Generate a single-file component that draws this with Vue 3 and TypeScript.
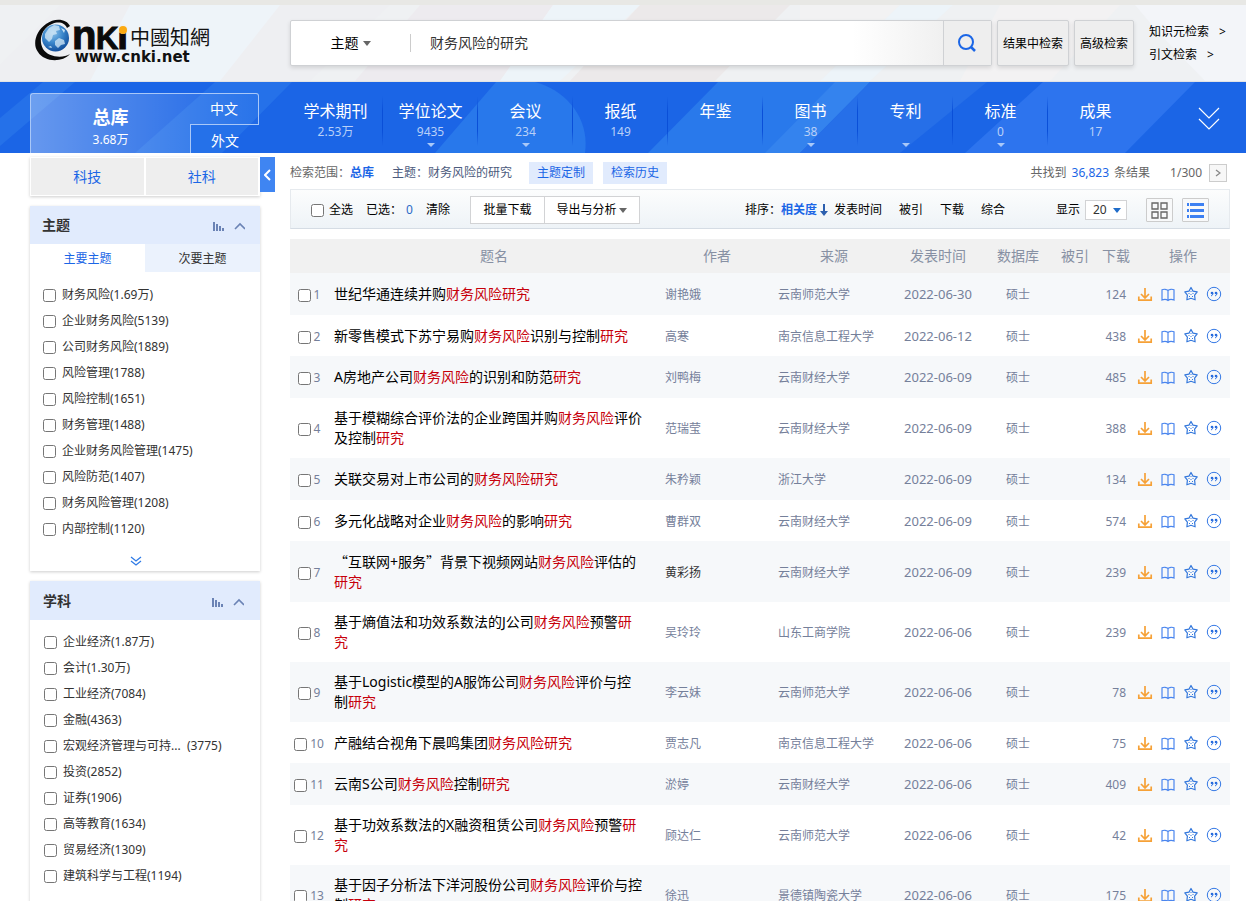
<script setup lang="ts">
import { ref } from 'vue'

type Kind = 'plain' | 'hit' | 'quote'
interface Part { text: string; kind: Kind }
interface Paper {
  title: Part[]
  author: string
  strong?: boolean
  source: string
  date: string
  downloads: number
}
interface Facet { name: string; count: string }

// "*" toggles the highlighted search terms, curly quotes take the full-width face
function parse(raw: string): Part[] {
  const parts: Part[] = []
  raw.split('*').forEach((chunk, i) => {
    chunk.split(/([“”])/).filter(Boolean).forEach((text) => {
      const kind: Kind = /[“”]/.test(text) ? 'quote' : i % 2 ? 'hit' : 'plain'
      parts.push({ text, kind })
    })
  })
  return parts
}

const dbs = [
  { name: '学术期刊', count: '2.53万', more: false },
  { name: '学位论文', count: '9435', more: true },
  { name: '会议', count: '234', more: true },
  { name: '报纸', count: '149', more: false },
  { name: '年鉴', count: '', more: false },
  { name: '图书', count: '38', more: true },
  { name: '专利', count: '', more: true },
  { name: '标准', count: '0', more: true },
  { name: '成果', count: '17', more: false },
]

const topics: Facet[] = [
  { name: '财务风险', count: '1.69万' },
  { name: '企业财务风险', count: '5139' },
  { name: '公司财务风险', count: '1889' },
  { name: '风险管理', count: '1788' },
  { name: '风险控制', count: '1651' },
  { name: '财务管理', count: '1488' },
  { name: '企业财务风险管理', count: '1475' },
  { name: '风险防范', count: '1407' },
  { name: '财务风险管理', count: '1208' },
  { name: '内部控制', count: '1120' },
]

const subjects: Facet[] = [
  { name: '企业经济', count: '1.87万' },
  { name: '会计', count: '1.30万' },
  { name: '工业经济', count: '7084' },
  { name: '金融', count: '4363' },
  { name: '宏观经济管理与可持...  ', count: '3775' },
  { name: '投资', count: '2852' },
  { name: '证券', count: '1906' },
  { name: '高等教育', count: '1634' },
  { name: '贸易经济', count: '1309' },
  { name: '建筑科学与工程', count: '1194' },
]

const papers: Paper[] = [
  { title: parse('世纪华通连续并购*财务风险研究*'), author: '谢艳娥', source: '云南师范大学', date: '2022-06-30', downloads: 124 },
  { title: parse('新零售模式下苏宁易购*财务风险*识别与控制*研究*'), author: '高寒', source: '南京信息工程大学', date: '2022-06-12', downloads: 438 },
  { title: parse('A房地产公司*财务风险*的识别和防范*研究*'), author: '刘鸭梅', source: '云南财经大学', date: '2022-06-09', downloads: 485 },
  { title: parse('基于模糊综合评价法的企业跨国并购*财务风险*评价及控制*研究*'), author: '范瑞莹', source: '云南财经大学', date: '2022-06-09', downloads: 388 },
  { title: parse('关联交易对上市公司的*财务风险研究*'), author: '朱矜颖', source: '浙江大学', date: '2022-06-09', downloads: 134 },
  { title: parse('多元化战略对企业*财务风险*的影响*研究*'), author: '曹群双', source: '云南财经大学', date: '2022-06-09', downloads: 574 },
  { title: parse('“互联网+服务”背景下视频网站*财务风险*评估的*研究*'), author: '黄彩扬', strong: true, source: '云南财经大学', date: '2022-06-09', downloads: 239 },
  { title: parse('基于熵值法和功效系数法的J公司*财务风险*预警*研究*'), author: '吴玲玲', source: '山东工商学院', date: '2022-06-06', downloads: 239 },
  { title: parse('基于Logistic模型的A服饰公司*财务风险*评价与控制*研究*'), author: '李云妹', source: '云南师范大学', date: '2022-06-06', downloads: 78 },
  { title: parse('产融结合视角下晨鸣集团*财务风险研究*'), author: '贾志凡', source: '南京信息工程大学', date: '2022-06-06', downloads: 75 },
  { title: parse('云南S公司*财务风险*控制*研究*'), author: '淤婷', source: '云南财经大学', date: '2022-06-06', downloads: 409 },
  { title: parse('基于功效系数法的X融资租赁公司*财务风险*预警*研究*'), author: '顾达仁', source: '云南师范大学', date: '2022-06-06', downloads: 42 },
  { title: parse('基于因子分析法下洋河股份公司*财务风险*评价与控制*研究*'), author: '徐迅', source: '景德镇陶瓷大学', date: '2022-06-06', downloads: 175 },
]

const query = ref('财务风险的研究')
</script>

<template>
  <div class="page">
    <header class="top">
      <svg class="backdrop" viewBox="0 0 1246 77" preserveAspectRatio="none" aria-hidden="true">
        <path d="M60 0H390L310 77H0V60Z" fill="#eeeff2" />
        <path d="M130 0H280L220 77H90Z" fill="#eef4f9" />
        <path d="M420 0H553L500 77H355Z" fill="#edebef" />
        <path d="M553 0H640L560 77H500Z" fill="#edf4f9" />
        <path d="M640 0H790L715 77H570Z" fill="#ece9ea" />
        <path d="M800 0H900L890 15H800Z" fill="#f2f2f3" />
        <path d="M900 0H953L870 77H820Z" fill="#edf4f9" />
        <path d="M1000 0H1120L1050 77H960Z" fill="#f3f2f3" />
        <path d="M1135 0H1246V77H1205L1160 30Z" fill="#f3f5f9" />
      </svg>
      <div class="top-row">
        <a class="logo" href="#" aria-label="中国知网">
          <svg width="190" height="56" viewBox="0 -4 190 56">
            <defs>
              <radialGradient id="globe" cx="0.4" cy="0.3" r="0.75">
                <stop offset="0" stop-color="#8cc3ea" />
                <stop offset="0.5" stop-color="#3a86cb" />
                <stop offset="1" stop-color="#0d4796" />
              </radialGradient>
            </defs>
            <path d="M36 10C33 3 21 1 12 8C2 15-2 28 4 36C10 46 28 47 36 38C28 43 14 41 9 33C4 24 8 12 18 8C25 5 31 7 33 12Z" fill="#0a0a0a" />
            <circle cx="21.500" cy="22" r="13.500" fill="url(#globe)" />
            <path d="M11 18l4-6 5-3 5 1 1 4-4 1 1 3-4 1-1 4-3 3-4-4ZM21 25l4-3 5 2 1 4-4 1-3 3-3-3Z" fill="#d5eaf7" opacity="0.75" />
            <path d="M27 12l4 2-1 3ZM14 31l3-1 1 2Z" fill="#c3e0f3" />
            <text x="38" y="33" class="word big">n</text>
            <text x="62" y="33" class="word cap">K</text>
            <text x="83" y="33" class="word big">ı</text>
            <circle cx="89" cy="13" r="5" fill="#eff1f3" />
            <circle cx="89" cy="14" r="4" fill="#fbaa12" />
            <text x="96" y="29" class="hanzi">中國知網</text>
            <text x="41" y="46" class="site">www.cnki.net</text>
          </svg>
        </a>
        <form class="search" @submit.prevent>
          <button type="button" class="field">主题<i class="caret"></i></button>
          <input v-model="query" type="text" aria-label="检索词" />
          <button type="submit" class="go" aria-label="检索">
            <svg width="20" height="20" viewBox="0 0 20 20" fill="none" stroke="#1b66e6" stroke-width="2">
              <circle cx="8" cy="9" r="7" /><path d="M13 14L17 18" stroke-width="2.500" />
            </svg>
          </button>
        </form>
        <button class="side-btn within">结果中检索</button>
        <button class="side-btn advanced">高级检索</button>
        <div class="links">
          <a href="#">知识元检索<span>&gt;</span></a>
          <a href="#">引文检索<span>&gt;</span></a>
        </div>
      </div>
    </header>

    <nav class="dbs">
      <svg class="backdrop" viewBox="0 0 1246 71" preserveAspectRatio="none" aria-hidden="true">
        <path d="M43 0H75L0 64V36Z" fill="#2571e9" />
        <path d="M215 0H292L222 71H135Z" fill="#2571e9" />
        <path d="M496 0H535C565 8 590 35 585 71H435Z" fill="#2878eb" />
        <path d="M718 0H870L800 71H648Z" fill="#2979eb" />
        <path d="M835 0H870L800 71H765Z" fill="#3483ee" />
        <path d="M870 0H987L900 71H800Z" fill="#266fe8" />
        <path d="M1043 0H1195L1125 71H965Z" fill="#2d74ee" />
      </svg>
      <div class="total">
        <a class="all" href="#"><b>总库</b><span>3.68万</span></a>
        <div class="langs"><a class="zh" href="#">中文</a><a class="foreign" href="#">外文</a></div>
      </div>
      <ul class="db-list">
        <li v-for="d in dbs" :key="d.name">
          <a href="#"><span class="db-name">{{ d.name }}</span><span class="db-count">{{ d.count }}</span><i v-if="d.more" class="caret"></i></a>
        </li>
      </ul>
      <button class="expand" aria-label="展开">
        <svg width="24" height="24" viewBox="0 0 24 24" fill="none" stroke="#fff" stroke-width="1.200"><path d="M2 1l10 10L22 1M2 12l10 10 10-10" /></svg>
      </button>
    </nav>

    <div class="body">
      <aside>
        <div class="fields"><button>科技</button><button>社科</button></div>
        <section class="card">
          <header>
            <h2>主题</h2>
            <svg width="32" height="12" viewBox="0 0 32 12"><path d="M0 1h2v9H0ZM3 3h2v7H3ZM6 5h2v5H6ZM9 7h2v3H9Z" fill="#6b83b5" /><path d="M22 8l5-5 5 5" fill="none" stroke="#6b83b5" stroke-width="1.600" /></svg>
          </header>
          <div class="tabs"><button class="on">主要主题</button><button>次要主题</button></div>
          <ul>
            <li v-for="f in topics" :key="f.name"><label><input type="checkbox" />{{ f.name }}({{ f.count }})</label></li>
          </ul>
          <button class="more" aria-label="更多">
            <svg width="12" height="10" viewBox="0 0 12 10" fill="none" stroke="#2f7be6" stroke-width="1.300"><path d="M1 1l5 4 5-4M1 5l5 4 5-4" /></svg>
          </button>
        </section>
        <section class="card second">
          <header>
            <h2>学科</h2>
            <svg width="32" height="12" viewBox="0 0 32 12"><path d="M0 1h2v9H0ZM3 3h2v7H3ZM6 5h2v5H6ZM9 7h2v3H9Z" fill="#6b83b5" /><path d="M22 8l5-5 5 5" fill="none" stroke="#6b83b5" stroke-width="1.600" /></svg>
          </header>
          <ul>
            <li v-for="f in subjects" :key="f.name"><label><input type="checkbox" />{{ f.name }}({{ f.count }})</label></li>
          </ul>
        </section>
      </aside>
      <button class="collapse" aria-label="收起">
        <svg width="8" height="12" viewBox="0 0 8 12" fill="none" stroke="#fff" stroke-width="2"><path d="M6 1L1 6l5 5" /></svg>
      </button>

      <main>
        <div class="crumbs">
          <span>检索范围：<b>总库</b></span>
          <span class="cond">主题：财务风险的研究</span>
          <button class="tag">主题定制</button>
          <button class="tag">检索历史</button>
          <div class="found">共找到<em>36,823</em>条结果</div>
          <span class="pages">1/300</span>
          <button class="next" aria-label="下一页">
            <svg width="6" height="8" viewBox="0 0 6 8" fill="none" stroke="#888" stroke-width="1.300"><path d="M1 1l4 3-4 3" /></svg>
          </button>
        </div>

        <div class="toolbar">
          <label class="pick"><input type="checkbox" />全选</label>
          <span class="chosen">已选：<em>0</em></span>
          <button class="plain">清除</button>
          <div class="group"><button>批量下载</button><button>导出与分析<i class="caret"></i></button></div>
          <div class="sort">
            <span>排序：</span>
            <button class="plain on">相关度<svg width="8" height="12" viewBox="0 0 8 12"><path d="M3 0h2v7h3l-4 5-4-5h3Z" fill="#2c5fae" /></svg></button>
            <button class="plain time">发表时间</button>
            <button class="plain">被引</button>
            <button class="plain">下载</button>
            <button class="plain">综合</button>
          </div>
          <label class="size">显示<span class="select"><select><option>20</option><option>50</option></select><i></i></span></label>
          <button class="view" aria-label="摘要">
            <svg width="17" height="17" viewBox="0 0 17 17" fill="none" stroke="#666" stroke-width="1.300"><path d="M1 1h6v6H1ZM10 1h6v6h-6ZM1 10h6v6H1ZM10 10h6v6h-6Z" /></svg>
          </button>
          <button class="view list" aria-label="列表">
            <svg width="17" height="15" viewBox="0 0 17 15" fill="#3d80f2"><path d="M0 0h2v3H0ZM3 0h14v3H3ZM0 6h2v3H0ZM3 6h14v3H3ZM0 12h2v3H0ZM3 12h14v3H3Z" /></svg>
          </button>
        </div>

        <table>
          <colgroup><col class="c-no" /><col /><col class="c-author" /><col class="c-source" /><col class="c-date" /><col class="c-db" /><col class="c-cited" /><col class="c-dl" /><col class="c-ops" /></colgroup>
          <thead>
            <tr><th></th><th>题名</th><th>作者</th><th>来源</th><th>发表时间</th><th>数据库</th><th>被引</th><th>下载</th><th>操作</th></tr>
          </thead>
          <tbody>
            <tr v-for="(p, i) in papers" :key="i">
              <td class="no"><label><input type="checkbox" />{{ i + 1 }}</label></td>
              <td class="title"><a href="#"><span v-for="(s, k) in p.title" :key="k" :class="s.kind">{{ s.text }}</span></a></td>
              <td class="author"><a v-if="p.strong" href="#">{{ p.author }}</a><template v-else>{{ p.author }}</template></td>
              <td class="source">{{ p.source }}</td>
              <td class="date">{{ p.date }}</td>
              <td class="db">硕士</td>
              <td></td>
              <td class="dl">{{ p.downloads }}</td>
              <td class="ops">
                <div>
                  <button aria-label="下载"><svg width="16" height="16" viewBox="0 0 16 16" fill="none" stroke="#f6a137" stroke-width="1.700"><path d="M8 2v9.500M4 8L8 12 12 8M1.800 10.500v3.700h12.400v-3.700" /></svg></button>
                  <button aria-label="阅读"><svg width="16" height="16" viewBox="0 0 16 16" fill="none" stroke="#4b86ee" stroke-width="1.200"><path d="M8 4.500C6.500 3 3.500 3 2 3.800V14C4 13.200 6.500 13.200 8 14.500C9.500 13.200 12 13.200 14 14V3.800C12.500 3 9.500 3 8 4.500ZM8 4.500v10" /></svg></button>
                  <button aria-label="收藏"><svg width="16" height="16" viewBox="0 0 16 16" fill="none" stroke="#3478dc" stroke-width="1.200" stroke-linejoin="round"><path d="M8 1.500l2 3.600 4.200.8-2.600 3.200.5 4.700L8 12.300l-4.100 1.500.5-4.700L1.800 5.900 6 5.100Z" /><path d="M7.500 5.500h1M5.500 7.500h1M9.500 7.500h1M7.500 8.500h1M6 10.500h1M9 10.500h1" stroke-width="1" /></svg></button>
                  <button aria-label="引用"><svg width="16" height="16" viewBox="0 0 16 16" fill="none" stroke="#3478e5" stroke-width="1"><circle cx="8" cy="8" r="6.700" /><circle cx="6" cy="7" r="1.300" fill="#2469dc" stroke="none" /><circle cx="10" cy="7" r="1.300" fill="#2469dc" stroke="none" /><path d="M7 7q0 2.500-2 3M11 7q0 2.500-2 3" /></svg></button>
                </div>
              </td>
            </tr>
          </tbody>
        </table>
      </main>
    </div>
  </div>
</template>

<style>
html { overflow: hidden; }
body { margin: 0; background: #fff; }
</style>

<style scoped>
.page { height: 100vh; overflow: hidden; font: 12px/20px "Noto Sans", "Noto Sans CJK SC", sans-serif; color: #333; }
.page * { box-sizing: border-box; }
a { color: inherit; text-decoration: none; }
button, input, select { font: inherit; color: inherit; margin: 0; padding: 0; border: 0; background: none; }
input[type="checkbox"] { width: 13px; height: 13px; flex: none; }
ul { list-style: none; margin: 0; padding: 0; }
em { font-style: normal; }
svg { display: block; }
.caret { display: inline-block; border: 4px solid transparent; border-top: 5px solid #666; border-bottom: 0; }
.backdrop { position: absolute; inset: 0; width: 100%; height: 100%; }

.top { position: relative; height: 82px; border-top: 5px solid #e8e8e5; background: #eff1f3; border-bottom: 1px solid #e2e3e5; }
.top-row { position: relative; display: flex; align-items: flex-start; padding: 15px 16px 0 30px; color: #000; }
.logo { width: 260px; flex: none; padding-left: 4px; margin-top: -8px; }
.word { font-family: "Liberation Sans", Arial, sans-serif; font-weight: bold; fill: #0a0a0a; stroke: #0a0a0a; stroke-width: 1px; }
.big { font-size: 40px; }
.cap { font-size: 31px; }
.hanzi { font: 20px "Noto Sans CJK TC", sans-serif; fill: #111; }
.site { font: bold 15px "DejaVu Sans", sans-serif; fill: #111; }
.search { flex: 1; display: flex; height: 46px; border: 1px solid #cfd1d4; border-radius: 2px; background: #fff; box-shadow: 0 2px 4px rgba(0, 0, 0, .12); }
.field { width: 120px; font-size: 14px; display: flex; align-items: center; justify-content: center; gap: 4px; border-right: 1px solid #ccc; margin: 13px 0; }
.search input { flex: 1; min-width: 0; padding: 0 19px; font-size: 14px; color: #333; background: linear-gradient(to right, #fff 83%, #f0f0f0); outline: 0; }
.go { width: 48px; display: grid; place-items: center; background: #eee; border-left: 1px solid #cfd1d4; }
.side-btn { height: 46px; padding-top: 2px; border: 1px solid #cfd1d4; border-radius: 2px; background: #eee; margin-left: 5px; box-shadow: 0 2px 4px rgba(0, 0, 0, .12); flex: none; }
.within { width: 72px; }
.advanced { width: 60px; }
.links { width: 81px; flex: none; margin-left: 15px; line-height: 23px; }
.links a { display: block; white-space: nowrap; }
.links span { margin-left: 10px; }

.dbs { position: relative; display: flex; height: 71px; padding: 0 16px 0 30px; background: #1b65e6; color: #fff; overflow: hidden; }
.total { position: relative; display: flex; width: 229px; margin-top: 11px; flex: none; }
.all { width: 160px; border: 1px solid #a9c8f8; border-right: 0; border-bottom: 0; border-radius: 3px 0 0; background: linear-gradient(to right, rgba(255, 255, 255, .33), rgba(255, 255, 255, .1)); display: flex; flex-direction: column; align-items: center; padding-top: 10px; }
.all b { font-size: 18px; line-height: 26px; }
.langs { width: 69px; text-align: center; font-size: 14px; }
.langs a { display: block; height: 32px; line-height: 30px; }
.zh { border: 1px solid #a9c8f8; border-left: 0; border-radius: 0 3px 0 0; background: linear-gradient(to right, rgba(255, 255, 255, .1), rgba(255, 255, 255, .02)); }
.langs .foreign { border-left: 1px solid #a9c8f8; line-height: 32px; }
.db-list { position: relative; display: flex; margin-left: 29px; }
.db-list li { width: 95px; background: linear-gradient(#1b65e600, #0a4fd8 30%, #0a4fd8 70%, #1b65e600) right 14px / 1px 50px no-repeat; }
.db-list li:last-child { background: none; }
.db-list a { display: flex; flex-direction: column; align-items: center; padding-top: 17px; }
.db-name { font-size: 16px; line-height: 24px; }
.db-count { height: 20px; line-height: 18px; color: #b9d0f8; }
.db-list .caret { border-top: 4px solid #a9c8f8; }
.expand { position: relative; margin-left: auto; padding: 3px 9px 0 0; }

.body { display: flex; align-items: flex-start; padding: 4px 16px 0 30px; }
aside { width: 230px; flex: none; }
.fields { display: flex; gap: 2px; padding: 1px 2px 1px 1px; height: 39px; box-shadow: 0 1px 3px rgba(0, 0, 0, .2); margin-bottom: 10px; }
.fields button { flex: 1; background: #eee; color: #1b66e6; font-size: 14px; }
.card { background: #fff; box-shadow: 0 1px 3px rgba(0, 0, 0, .2); margin-bottom: 10px; color: #333; }
.card header { display: flex; align-items: center; justify-content: space-between; height: 38px; padding: 0 15px 0 12px; background: #e1ebfd; }
.card header svg { margin-top: 4px; }
h2 { margin: 0; font-size: 14px; font-weight: bold; }
.tabs { display: flex; height: 28px; }
.tabs button { flex: 1; background: #ebf2fd; padding-top: 2px; }
.tabs .on { background: #fff; color: #1b66e6; }
.card ul { padding: 10px 0 9px 13px; }
.card li { height: 26px; line-height: 26px; }
.card label { display: flex; align-items: center; gap: 6px; white-space: pre; }
.more { display: block; width: 100%; height: 20px; padding-left: 100px; }
.card.second header { height: 39px; padding: 0 16px 0 13px; }
.card.second ul { padding: 9px 0 30px 14px; }
.collapse { width: 15px; height: 35px; background: #3f85f2; display: grid; place-items: center; flex: none; }

main { flex: 1; min-width: 0; margin-left: 15px; }
.crumbs { display: flex; align-items: center; height: 32px; color: #666; }
.crumbs b { color: #1b66e6; }
.cond { margin: 0 17px 0 18px; color: #4c5b7d; }
.tag { width: 64px; height: 22px; background: #e1ebfd; color: #1b66e6; margin-right: 10px; }
.found { margin-left: auto; }
.found em { color: #1b66e6; margin: 0 5px; }
.pages { margin: 0 7px 0 20px; }
.next { width: 18px; height: 18px; border: 1px solid #ccc; background: #f7f7f7; display: grid; place-items: center; margin-right: 3px; }
.toolbar { display: flex; align-items: center; height: 40px; padding: 2px 20px 0; border: 1px solid #e6eaee; border-bottom-color: #d5dce4; background: linear-gradient(#fcfdfd, #eef3f7); color: #000; }
.pick { display: flex; align-items: center; gap: 5px; }
.chosen { margin: 0 13px; }
.chosen em { color: #2c6ac8; margin-left: 4px; }
.group { display: flex; margin-left: 20px; }
.group button { height: 28px; width: 75px; border: 1px solid #d2d3d5; background: #fff; }
.group button + button { width: 96px; margin-left: -1px; display: flex; align-items: center; justify-content: center; gap: 3px; }
.sort { display: flex; margin-left: auto; }
.sort button { margin-right: 17px; }
.sort .on { display: flex; align-items: center; gap: 3px; color: #1b66e6; font-weight: bold; margin-right: 6px; }
.size { display: flex; align-items: center; gap: 5px; margin: 0 19px 0 34px; }
.select { position: relative; }
.select select { display: block; appearance: none; width: 42px; height: 20px; border: 1px solid #d2d3d5; background: #fff; padding-left: 7px; line-height: 18px; color: #333; border-radius: 0; }
.select i { position: absolute; right: 6px; top: 8px; border: 4px solid transparent; border-top: 5px solid #1f6cc9; border-bottom: 0; pointer-events: none; }
.view { width: 27px; height: 24px; border: 1px solid #ccc; border-radius: 1px; display: grid; place-items: center; background: #f8f9fa; }
.list { margin-left: 9px; }

table { width: 100%; margin-top: 10px; table-layout: fixed; border-collapse: collapse; color: #75809a; }
.c-no { width: 38px; }
.c-author { width: 114px; }
.c-source { width: 120px; }
.c-date { width: 88px; }
.c-db { width: 72px; }
.c-cited { width: 42px; }
.c-dl { width: 40px; }
.c-ops { width: 94px; }
th { height: 34px; padding: 0; background: #f1f1f1; font-size: 14px; font-weight: normal; color: #8790a3; }
td { height: 42px; padding: 2px 0 0; }
tbody tr:nth-child(odd) { background: #f6f8fa; }
tbody tr:nth-child(even) td { height: 41px; }
.no label { display: flex; align-items: center; justify-content: center; gap: 3px; }
.no input { margin-top: 1px; }
.title { padding: 10px 15px 10px 6px; font-size: 14px; color: #000; }
.hit { color: #c7000b; }
.quote { font-family: "Noto Sans CJK SC", sans-serif; }
.author { padding-left: 5px; }
.author a { color: #333; }
.source { padding-left: 4px; white-space: nowrap; }
.date { text-align: center; font-size: 13px; padding-top: 0; }
.db { text-align: center; }
.dl { text-align: right; padding-right: 10px; }
.ops { padding-top: 0; }
.ops div { display: flex; gap: 7px; padding-left: 1px; }
.ops button { width: 16px; height: 16px; }
</style>
